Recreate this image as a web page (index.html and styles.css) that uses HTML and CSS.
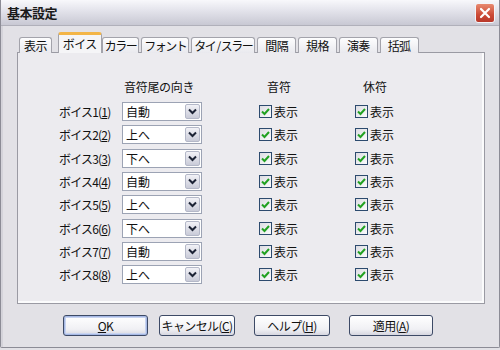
FILE: index.html
```html
<!DOCTYPE html>
<html lang="ja">
<head>
    <meta charset="UTF-8">
    <title>基本設定</title>
    <link rel="stylesheet" href="styles.css">
</head>
<body>
    <div class="window">
        <div class="titlebar">
            <span class="title">基本設定</span>
            <span class="close">
                <svg width="12" height="12" viewBox="0 0 12 12"><path d="M2 2 L10 10 M10 2 L2 10" stroke="#fff" stroke-width="2.2" stroke-linecap="round"/></svg>
            </span>
        </div>
        <div class="body">
            <div class="tabs">
                <div class="tab">表示</div>
                <div class="tab kana active">ボイス</div>
                <div class="tab kana">カラー</div>
                <div class="tab kana">フォント</div>
                <div class="tab kana">タイ / スラー</div>
                <div class="tab">間隔</div>
                <div class="tab">規格</div>
                <div class="tab">演奏</div>
                <div class="tab">括弧</div>
            </div>
            <div class="panel">
                <div class="grid">
                    <div></div>
                    <div class="head head-stem">音符尾の向き</div>
                    <div></div>
                    <div class="head">音符</div>
                    <div class="head">休符</div>

                    <div class="label">ボイス1(<u>1</u>)</div>
                    <div class="combo"><span class="value">自動</span><span class="drop"><svg width="9" height="7" viewBox="0 0 9 7"><path d="M1 1.5 L4.5 5 L8 1.5" fill="none" stroke="#1d2436" stroke-width="2"/></svg></span></div>
                    <div></div>
                    <label class="check"><span class="box"><svg width="9" height="9" viewBox="0 0 9 9"><path d="M1 4.5 L3.5 7 L8 2" fill="none" stroke="#21a121" stroke-width="2"/></svg></span>表示</label>
                    <label class="check"><span class="box"><svg width="9" height="9" viewBox="0 0 9 9"><path d="M1 4.5 L3.5 7 L8 2" fill="none" stroke="#21a121" stroke-width="2"/></svg></span>表示</label>

                    <div class="label">ボイス2(<u>2</u>)</div>
                    <div class="combo"><span class="value">上へ</span><span class="drop"><svg width="9" height="7" viewBox="0 0 9 7"><path d="M1 1.5 L4.5 5 L8 1.5" fill="none" stroke="#1d2436" stroke-width="2"/></svg></span></div>
                    <div></div>
                    <label class="check"><span class="box"><svg width="9" height="9" viewBox="0 0 9 9"><path d="M1 4.5 L3.5 7 L8 2" fill="none" stroke="#21a121" stroke-width="2"/></svg></span>表示</label>
                    <label class="check"><span class="box"><svg width="9" height="9" viewBox="0 0 9 9"><path d="M1 4.5 L3.5 7 L8 2" fill="none" stroke="#21a121" stroke-width="2"/></svg></span>表示</label>

                    <div class="label">ボイス3(<u>3</u>)</div>
                    <div class="combo"><span class="value">下へ</span><span class="drop"><svg width="9" height="7" viewBox="0 0 9 7"><path d="M1 1.5 L4.5 5 L8 1.5" fill="none" stroke="#1d2436" stroke-width="2"/></svg></span></div>
                    <div></div>
                    <label class="check"><span class="box"><svg width="9" height="9" viewBox="0 0 9 9"><path d="M1 4.5 L3.5 7 L8 2" fill="none" stroke="#21a121" stroke-width="2"/></svg></span>表示</label>
                    <label class="check"><span class="box"><svg width="9" height="9" viewBox="0 0 9 9"><path d="M1 4.5 L3.5 7 L8 2" fill="none" stroke="#21a121" stroke-width="2"/></svg></span>表示</label>

                    <div class="label">ボイス4(<u>4</u>)</div>
                    <div class="combo"><span class="value">自動</span><span class="drop"><svg width="9" height="7" viewBox="0 0 9 7"><path d="M1 1.5 L4.5 5 L8 1.5" fill="none" stroke="#1d2436" stroke-width="2"/></svg></span></div>
                    <div></div>
                    <label class="check"><span class="box"><svg width="9" height="9" viewBox="0 0 9 9"><path d="M1 4.5 L3.5 7 L8 2" fill="none" stroke="#21a121" stroke-width="2"/></svg></span>表示</label>
                    <label class="check"><span class="box"><svg width="9" height="9" viewBox="0 0 9 9"><path d="M1 4.5 L3.5 7 L8 2" fill="none" stroke="#21a121" stroke-width="2"/></svg></span>表示</label>

                    <div class="label">ボイス5(<u>5</u>)</div>
                    <div class="combo"><span class="value">上へ</span><span class="drop"><svg width="9" height="7" viewBox="0 0 9 7"><path d="M1 1.5 L4.5 5 L8 1.5" fill="none" stroke="#1d2436" stroke-width="2"/></svg></span></div>
                    <div></div>
                    <label class="check"><span class="box"><svg width="9" height="9" viewBox="0 0 9 9"><path d="M1 4.5 L3.5 7 L8 2" fill="none" stroke="#21a121" stroke-width="2"/></svg></span>表示</label>
                    <label class="check"><span class="box"><svg width="9" height="9" viewBox="0 0 9 9"><path d="M1 4.5 L3.5 7 L8 2" fill="none" stroke="#21a121" stroke-width="2"/></svg></span>表示</label>

                    <div class="label">ボイス6(<u>6</u>)</div>
                    <div class="combo"><span class="value">下へ</span><span class="drop"><svg width="9" height="7" viewBox="0 0 9 7"><path d="M1 1.5 L4.5 5 L8 1.5" fill="none" stroke="#1d2436" stroke-width="2"/></svg></span></div>
                    <div></div>
                    <label class="check"><span class="box"><svg width="9" height="9" viewBox="0 0 9 9"><path d="M1 4.5 L3.5 7 L8 2" fill="none" stroke="#21a121" stroke-width="2"/></svg></span>表示</label>
                    <label class="check"><span class="box"><svg width="9" height="9" viewBox="0 0 9 9"><path d="M1 4.5 L3.5 7 L8 2" fill="none" stroke="#21a121" stroke-width="2"/></svg></span>表示</label>

                    <div class="label">ボイス7(<u>7</u>)</div>
                    <div class="combo"><span class="value">自動</span><span class="drop"><svg width="9" height="7" viewBox="0 0 9 7"><path d="M1 1.5 L4.5 5 L8 1.5" fill="none" stroke="#1d2436" stroke-width="2"/></svg></span></div>
                    <div></div>
                    <label class="check"><span class="box"><svg width="9" height="9" viewBox="0 0 9 9"><path d="M1 4.5 L3.5 7 L8 2" fill="none" stroke="#21a121" stroke-width="2"/></svg></span>表示</label>
                    <label class="check"><span class="box"><svg width="9" height="9" viewBox="0 0 9 9"><path d="M1 4.5 L3.5 7 L8 2" fill="none" stroke="#21a121" stroke-width="2"/></svg></span>表示</label>

                    <div class="label">ボイス8(<u>8</u>)</div>
                    <div class="combo"><span class="value">上へ</span><span class="drop"><svg width="9" height="7" viewBox="0 0 9 7"><path d="M1 1.5 L4.5 5 L8 1.5" fill="none" stroke="#1d2436" stroke-width="2"/></svg></span></div>
                    <div></div>
                    <label class="check"><span class="box"><svg width="9" height="9" viewBox="0 0 9 9"><path d="M1 4.5 L3.5 7 L8 2" fill="none" stroke="#21a121" stroke-width="2"/></svg></span>表示</label>
                    <label class="check"><span class="box"><svg width="9" height="9" viewBox="0 0 9 9"><path d="M1 4.5 L3.5 7 L8 2" fill="none" stroke="#21a121" stroke-width="2"/></svg></span>表示</label>
                </div>
            </div>
            <div class="buttons">
                <button class="btn btn-ok default"><u>O</u>K</button>
                <button class="btn btn-cancel">キャンセル(<u>C</u>)</button>
                <button class="btn btn-help">ヘルプ(<u>H</u>)</button>
                <button class="btn btn-apply">適用(<u>A</u>)</button>
            </div>
        </div>
    </div>
</body>
</html>
```

FILE: styles.css
```css
body {
    margin: 0;
    width: 500px;
    height: 350px;
    overflow: hidden;
    font-family: "Noto Sans CJK JP", "Liberation Sans", sans-serif;
    font-size: 12px;
    color: #111;
    background: #e2e1e6;
}

.window {
    box-sizing: border-box;
    width: 500px;
    height: 348px;
    border: 1px solid #8c8c96;
    border-top: none;
    border-radius: 0 0 2px 2px;
    background: #e2e1e6;
    display: flex;
    flex-direction: column;
}

.titlebar {
    height: 25px;
    display: flex;
    align-items: center;
    justify-content: space-between;
    padding: 0 4px 0 6px;
    background: linear-gradient(#f8f8fb, #e2e2ea 45%, #c8c8d3);
    border-bottom: 1px solid #b0b0ba;
}

.title {
    font-weight: bold;
    font-size: 13px;
    color: #1a1a1a;
    letter-spacing: -0.5px;
}

.close {
    width: 18px;
    height: 18px;
    margin-top: 1px;
    border: 1px solid #f4f4f8;
    border-radius: 3px;
    background: linear-gradient(#e88a70, #cc4a36 60%, #b8382a);
    display: flex;
    align-items: center;
    justify-content: center;
}

.body {
    flex: 1;
    padding: 0 2px 0 14px;
    border-left: 2px solid #d4d3da;
}

.tabs {
    display: flex;
    align-items: flex-end;
    height: 26px;
    padding-left: 2px;
    white-space: nowrap;
}

.tab {
    height: 15px;
    line-height: 15px;
    padding: 0 7px;
    margin-right: 2px;
    letter-spacing: -0.6px;
    border: 1px solid #a3a3ab;
    border-bottom: none;
    border-radius: 3px 3px 0 0;
    background: linear-gradient(#fdfdfe, #e9e9ee);
    position: relative;
    top: 1px;
}

.tab:first-child {
    padding: 0 4px;
}

.tab.kana {
    padding: 0 2px;
    letter-spacing: -1.5px;
}

.tab.active {
    height: 18px;
    line-height: 18px;
    padding: 0 4px;
    margin: 0 0 0 4px;
    letter-spacing: -0.6px;
    border-top: 3px solid #f3b547;
    background: #f5f5f7;
    z-index: 1;
}

.panel {
    box-sizing: border-box;
    width: 468px;
    height: 252px;
    border: 1px solid #9a9aa3;
    background: #ecebef;
    box-shadow: inset -2px -2px 0 #fbfbfc;
}

.grid {
    display: grid;
    grid-template-columns: 63px 80px 57px 96px 100px;
    grid-template-rows: 22px repeat(8, 23.3px);
    padding: 25px 0 0 41px;
    align-items: center;
}

.head {
    padding-left: 8px;
    align-self: start;
}

.head-stem {
    padding-left: 2px;
    letter-spacing: -0.3px;
}

.label {
    letter-spacing: -0.8px;
    white-space: nowrap;
}

.combo {
    box-sizing: border-box;
    height: 19px;
    width: 80px;
    display: flex;
    border: 1px solid #9ca3b4;
    background: #fff;
}

.value {
    flex: 1;
    line-height: 17px;
    padding-left: 3px;
}

.drop {
    width: 15px;
    margin: 1px;
    border-radius: 2px;
    background: linear-gradient(#f2f2f7, #c9cbd8);
    border: 1px solid #b4b8c8;
    box-sizing: border-box;
    display: flex;
    align-items: center;
    justify-content: center;
}

.check {
    display: flex;
    align-items: center;
    gap: 2px;
}

.box {
    box-sizing: border-box;
    width: 13px;
    height: 13px;
    border: 1px solid #2c4a6e;
    background: linear-gradient(135deg, #dcdce2, #fbfbfc);
    display: flex;
    align-items: center;
    justify-content: center;
}

.buttons {
    display: flex;
    padding: 11px 0 0 46px;
}

.btn {
    height: 21px;
    padding: 0;
    font-family: inherit;
    font-size: 12px;
    color: #111;
    white-space: nowrap;
    letter-spacing: -0.6px;
    border: 1px solid #3d4a66;
    border-radius: 3px;
    background: linear-gradient(#ffffff, #f0f0f4 70%, #d6d6e0);
}

.btn-ok {
    width: 85px;
}

.btn.default {
    box-shadow: inset 0 0 0 1px #a6b8e4, inset 0 0 0 2px #c8d4f0;
}

.btn-cancel {
    width: 76px;
    margin-left: 11px;
}

.btn-help {
    width: 76px;
    margin-left: 19px;
}

.btn-apply {
    width: 84px;
    margin-left: 19px;
}
```
